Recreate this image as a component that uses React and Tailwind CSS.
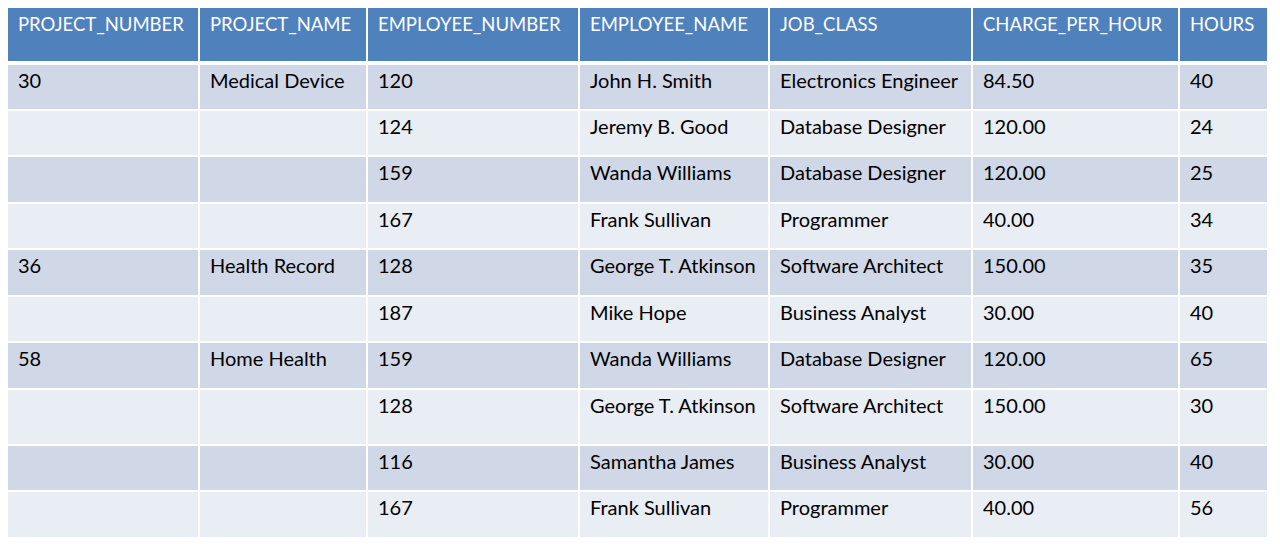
import React from 'react'

const columns = [
  { key: 'projectNumber', label: 'PROJECT_NUMBER', width: 'w-[192px]' },
  { key: 'projectName', label: 'PROJECT_NAME', width: 'w-[168px]' },
  { key: 'employeeNumber', label: 'EMPLOYEE_NUMBER', width: 'w-[212px]' },
  { key: 'employeeName', label: 'EMPLOYEE_NAME', width: 'w-[190px]' },
  { key: 'jobClass', label: 'JOB_CLASS', width: 'w-[203px]' },
  { key: 'charge', label: 'CHARGE_PER_HOUR', width: 'w-[207px]' },
  { key: 'hours', label: 'HOURS', width: 'w-[89px]' },
]

const rows = [
  ['30', 'Medical Device', '120', 'John H. Smith', 'Electronics Engineer', '84.50', '40'],
  ['', '', '124', 'Jeremy B. Good', 'Database Designer', '120.00', '24'],
  ['', '', '159', 'Wanda Williams', 'Database Designer', '120.00', '25'],
  ['', '', '167', 'Frank Sullivan', 'Programmer', '40.00', '34'],
  ['36', 'Health Record', '128', 'George T. Atkinson', 'Software Architect', '150.00', '35'],
  ['', '', '187', 'Mike Hope', 'Business Analyst', '30.00', '40'],
  ['58', 'Home Health', '159', 'Wanda Williams', 'Database Designer', '120.00', '65'],
  ['', '', '128', 'George T. Atkinson', 'Software Architect', '150.00', '30', true],
  ['', '', '116', 'Samantha James', 'Business Analyst', '30.00', '40'],
  ['', '', '167', 'Frank Sullivan', 'Programmer', '40.00', '56'],
]

export default function App() {
  return (
    <div className="bg-white h-[544px] w-[1280px] pl-[6px] pt-[6px] font-['Lato','Liberation_Sans',sans-serif]">
      <table className="table-fixed border-collapse">
        <colgroup>
          {columns.map(col => <col key={col.key} className={col.width} />)}
        </colgroup>
        <thead>
          <tr className="bg-[#4f81bd] text-white">
            {columns.map(col => (
              <th key={col.key} className="border-2 border-white border-b-4 h-[56px] align-top text-left font-normal text-[18.5px] pl-[10px] pt-[4px] leading-[24px] whitespace-nowrap">
                {col.label}
              </th>
            ))}
          </tr>
        </thead>
        <tbody>
          {rows.map((row, i) => (
            <tr key={i} className={i % 2 === 0 ? 'bg-[#d0d8e8]' : 'bg-[#e9edf4]'}>
              {row.slice(0, 7).map((cell, j) => (
                <td key={j} className={`border-2 border-white align-top pl-[10px] pt-[3px] text-[20px] leading-[24px] text-black whitespace-nowrap ${row[7] ? 'h-[56px]' : 'h-[46.5px]'}`}>
                  {cell}
                </td>
              ))}
            </tr>
          ))}
        </tbody>
      </table>
    </div>
  )
}
